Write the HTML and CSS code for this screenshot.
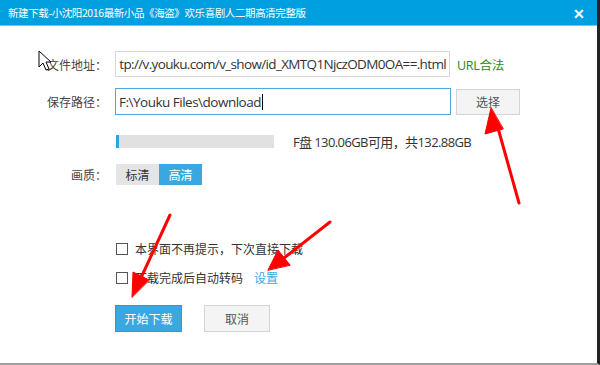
FILE: index.html
```html
<!DOCTYPE html>
<html lang="zh-CN">
<head>
    <meta charset="UTF-8">
    <title>新建下载</title>
    <link rel="stylesheet" href="styles.css">
</head>
<body>
    <div class="dialog">
        <div class="titlebar">
            <span class="title">新建下载-小沈阳2016最新小品《海盗》欢乐喜剧人二期高清完整版</span>
            <span class="close">✕</span>
        </div>
        <div class="content">
            <div class="row row-url">
                <label class="label">文件地址：</label>
                <div class="field field-url"><span>tp://v.youku.com/v_show/id_XMTQ1NjczODM0OA==.html</span></div>
                <span class="ok">URL合法</span>
            </div>
            <div class="row row-path">
                <label class="label">保存路径：</label>
                <div class="field field-path">F:\Youku Files\download<span class="caret"></span></div>
                <button class="btn btn-gray btn-pick">选择</button>
            </div>
            <div class="row row-disk">
                <div class="bar"><div class="bar-fill" style="width: 3px"></div></div>
                <span class="disk">F盘 130.06GB可用，共132.88GB</span>
            </div>
            <div class="row row-quality">
                <label class="label">画质：</label>
                <div class="seg">
                    <span class="seg-item">标清</span>
                    <span class="seg-item active">高清</span>
                </div>
            </div>
            <div class="checks">
                <div class="check"><span class="box"></span>本界面不再提示，下次直接下载</div>
                <div class="check"><span class="box"></span>下载完成后自动转码<a class="link">设置</a></div>
            </div>
            <div class="actions">
                <button class="btn btn-blue">开始下载</button>
                <button class="btn btn-gray">取消</button>
            </div>
        </div>

        <svg class="overlay" width="600" height="365" viewBox="0 0 600 365">
            <g stroke="#ff0000" stroke-width="3" stroke-linecap="round" fill="#ff0000">
                <line x1="519" y1="203" x2="498" y2="128"/>
                <polygon points="491,108 485,134 503,129" stroke-width="1"/>
                <line x1="170" y1="215" x2="140" y2="280"/>
                <polygon points="132,297 133,272 149,280" stroke-width="1"/>
                <line x1="330" y1="222" x2="284" y2="258"/>
                <polygon points="268,270 278,250 290,265" stroke-width="1"/>
            </g>
            <path d="M39 51 L39 67 L43 63 L46 70 L49 69 L46 62 L51 62 Z" fill="#fff" stroke="#000" stroke-width="1" stroke-linejoin="round"/>
        </svg>
    </div>
</body>
</html>
```

FILE: styles.css
```css
body {
    margin: 0;
    font-family: "Noto Sans CJK SC", sans-serif;
    font-size: 12px;
    color: #333;
    background: #fff;
}
.dialog {
    position: relative;
    width: 597px;
    height: 363px;
    border-right: 3px solid #222;
    border-bottom: 2px solid #a0a0a0;
    background: #fff;
    overflow: hidden;
}
.titlebar {
    height: 25px;
    background: #00a0e0;
    border-bottom: 1px solid #7cc8ea;
    display: flex;
    align-items: center;
    justify-content: space-between;
    padding: 0 12px 0 8px;
    color: #fff;
}
.title {
    font-size: 10.5px;
    letter-spacing: -0.4px;
}
.close {
    font-size: 14px;
    font-weight: bold;
}
.content {
    padding-top: 25px;
}
.row {
    display: flex;
    align-items: center;
}
.label {
    width: 107px;
    text-align: right;
    font-size: 12px;
    color: #444;
    flex-shrink: 0;
}
.field {
    margin-left: 8px;
    height: 24px;
    display: flex;
    align-items: center;
    font-family: "Open Sans", "Noto Sans CJK SC", sans-serif;
    font-size: 13.5px;
    letter-spacing: -0.5px;
    color: #333;
    overflow: hidden;
    white-space: nowrap;
}
.field-url {
    width: 328px;
    border: 1px solid #d8d8d8;
    padding: 0 3px 0 2px;
    justify-content: flex-end;
    letter-spacing: -0.65px;
}
.field-path {
    width: 328px;
    height: 25px;
    border: 1px solid #4aa9e0;
    padding: 0 3px;
}
.caret {
    display: inline-block;
    width: 1px;
    height: 16px;
    background: #000;
    margin-left: 1px;
}
.ok {
    margin-left: 7px;
    color: #2a8a20;
    font-family: "Open Sans", "Noto Sans CJK SC", sans-serif;
    font-size: 12.5px;
    letter-spacing: -0.3px;
}
.row-path {
    margin-top: 11px;
}
.btn {
    font-family: "Noto Sans CJK SC", sans-serif;
    font-size: 12px;
    height: 27px;
    padding: 0;
    cursor: pointer;
}
.btn-gray {
    width: 66px;
    background: #f4f4f4;
    border: 1px solid #d4d4d4;
    color: #555;
}
.btn-pick {
    margin-left: 5px;
    height: 26px;
    width: 64px;
}
.row-disk {
    margin-top: 17px;
    padding-left: 116px;
}
.bar {
    width: 158px;
    height: 13px;
    background: #e1e1e1;
}
.bar-fill {
    height: 100%;
    background: #2ea3e0;
}
.disk {
    margin-left: 19px;
    font-family: "Open Sans", "Noto Sans CJK SC", sans-serif;
    font-size: 13px;
    letter-spacing: -0.6px;
    color: #333;
}
.row-quality {
    margin-top: 13px;
}
.seg {
    margin-left: 9px;
    display: flex;
}
.seg-item {
    width: 43px;
    height: 21px;
    line-height: 21px;
    text-align: center;
    background: #e5e5e5;
    font-size: 12px;
    color: #333;
}
.seg-item.active {
    background: #3aa8e0;
    color: #fff;
}
.checks {
    margin-top: 55px;
    padding-left: 116px;
    display: flex;
    flex-direction: column;
    gap: 12px;
}
.check {
    display: flex;
    align-items: center;
    height: 17px;
    font-size: 12px;
    color: #333;
}
.box {
    width: 10px;
    height: 10px;
    border: 1px solid #555;
    margin-right: 7px;
}
.link {
    margin-left: 11px;
    color: #3aa8e0;
}
.actions {
    margin-top: 19px;
    padding-left: 115px;
    display: flex;
    gap: 22px;
}
.btn-blue {
    width: 67px;
    background: #3aa8e0;
    border: 1px solid #2b9bd6;
    color: #fff;
}
.overlay {
    position: absolute;
    left: 0;
    top: 0;
    pointer-events: none;
}
```
